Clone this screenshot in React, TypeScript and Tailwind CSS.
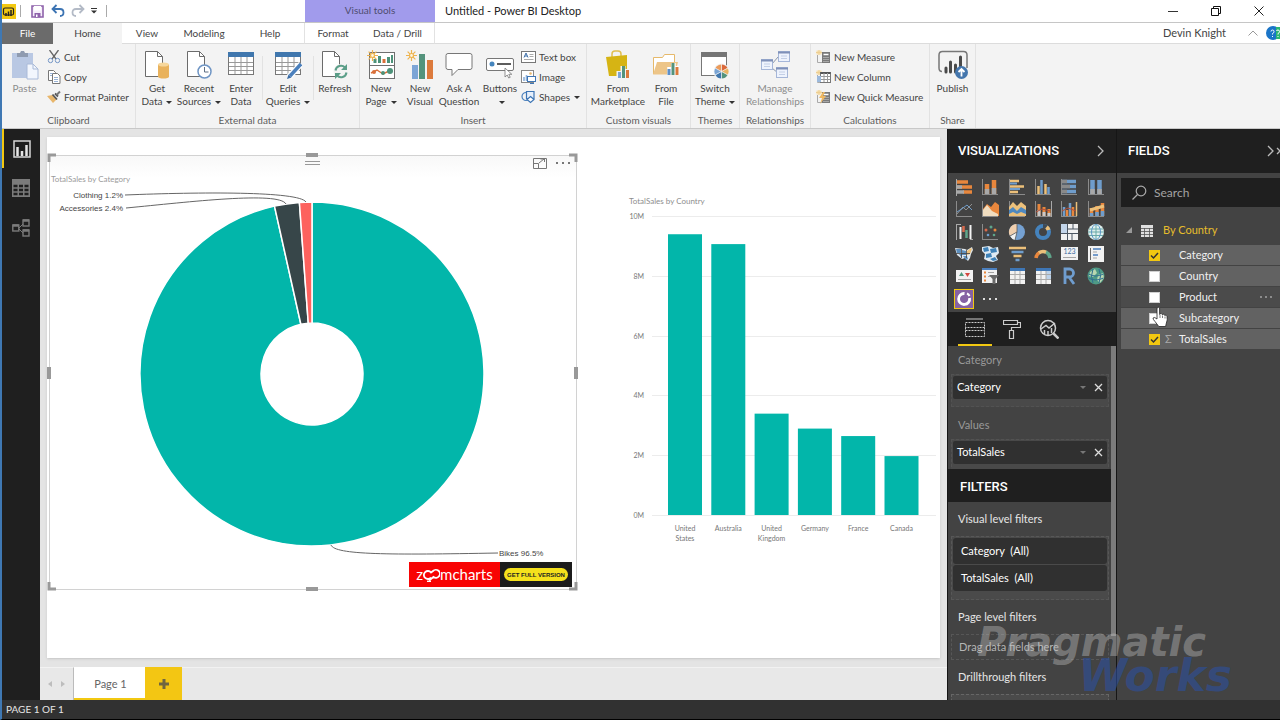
import type { ReactNode } from "react";

const ink = "#6b6b6b";

/* ---------- ribbon icons ---------- */

function Svg({ w, h, children }: { w: number; h: number; children: ReactNode }) {
  return (
    <svg width={w} height={h} viewBox={`0 0 ${w} ${h}`} fill="none" aria-hidden="true">
      {children}
    </svg>
  );
}

function Sun() {
  return (
    <g stroke="#eeb44f" strokeWidth="1.2">
      <path d="M5.5 0v11M0 5.5h11M1.6 1.6l7.8 7.8M9.4 1.6L1.6 9.4" />
      <circle cx="5.5" cy="5.5" r="2" fill="#fff6df" />
    </g>
  );
}

function PasteIcon() {
  return (
    <Svg w={28} h={30}>
      <rect x="1" y="3" width="21" height="25" fill="#b9c8e3" />
      <path d="M6 3h3l1-2h3l1 2h3v4H6z" fill="#8f9bb0" />
      <path d="M16 14h6l5 5v10H16z" fill="#f2f6fd" stroke="#a9bad8" />
      <path d="M22 14v5h5" stroke="#a9bad8" />
    </Svg>
  );
}

function PageShape() {
  return (
    <g stroke={ink} strokeWidth="1">
      <path d="M1.5 1.5h12l5 5v20h-17z" fill="#fff" />
      <path d="M13.5 1.5v5h5" />
    </g>
  );
}

function GetDataIcon() {
  return (
    <Svg w={26} h={30}>
      <PageShape />
      <path d="M14 14.5v12c0 1.4 2.5 2 5.5 2s5.5-.6 5.5-2v-12z" fill="#e9b25c" />
      <ellipse cx="19.5" cy="14.5" rx="5.5" ry="2" fill="#f7d79b" />
    </Svg>
  );
}

function RecentIcon() {
  return (
    <Svg w={26} h={30}>
      <PageShape />
      <circle cx="18.5" cy="21.5" r="6.5" fill="#fff" stroke="#6f95c4" strokeWidth="1.5" />
      <path d="M18.5 17v5h4" stroke="#5f6f83" />
    </Svg>
  );
}

function TableGrid() {
  return (
    <g>
      <rect x="1.5" y="2.5" width="25" height="22" fill="#fff" stroke="#777" />
      <rect x="1" y="2" width="26" height="5" fill="#4077ae" />
      <path d="M2 12.5h24M2 16.5h24M2 20.5h24M8 7v17M14 7v17M20 7v17" stroke="#999" />
    </g>
  );
}

function EnterDataIcon() {
  return (
    <Svg w={28} h={30}>
      <TableGrid />
    </Svg>
  );
}

function EditQueriesIcon() {
  return (
    <Svg w={28} h={30}>
      <TableGrid />
      <path d="M27 14L15 27" stroke="#fff" strokeWidth="6" />
      <path d="M27 14L16 26" stroke="#4b80bd" strokeWidth="3.5" />
      <path d="M14.5 24.5l3 3-4.5 1.5z" fill="#3a6ca5" />
    </Svg>
  );
}

function RefreshIcon() {
  return (
    <Svg w={28} h={30}>
      <PageShape />
      <circle cx="20" cy="21.5" r="7.5" fill="#f3f3f3" />
      <path d="M14.5 20.5a5.5 5.5 0 0 1 9.5-3M25.5 22.5a5.5 5.5 0 0 1-9.5 3" stroke="#5b9e88" strokeWidth="2" />
      <path d="M26 14v6h-6zM14 29v-6h6z" fill="#5b9e88" />
    </Svg>
  );
}

function NewPageIcon() {
  return (
    <Svg w={29} h={30}>
      <rect x="2.5" y="2.5" width="25" height="26" fill="#fff" stroke="#6f6f6f" />
      <path d="M3 15.5h24" stroke="#6f6f6f" />
      <path d="M8 9v4M21.5 7v6" stroke="#4d9279" strokeWidth="3" />
      <path d="M12.5 6v7" stroke="#4d9279" strokeWidth="3" />
      <path d="M17 9v4" stroke="#d9703a" strokeWidth="3" />
      <path d="M25 5v8" stroke="#4d9279" strokeWidth="2" />
      <path d="M4 23l6-3 6 4 8-4" stroke="#d9703a" strokeWidth="1.5" />
      <circle cx="7" cy="22" r="2" fill="#d9703a" />
      <circle cx="16" cy="23" r="2" fill="#4d9279" />
      <circle cx="23" cy="21" r="3" fill="#4d9279" />
      <Sun />
    </Svg>
  );
}

function NewVisualIcon() {
  return (
    <Svg w={28} h={30}>
      <rect x="6" y="15" width="6" height="14" fill="#7ca5d6" />
      <rect x="13" y="4" width="6" height="25" fill="#54937c" />
      <rect x="21" y="10" width="6" height="19" fill="#dc7a3c" />
      <Sun />
    </Svg>
  );
}

function AskIcon() {
  return (
    <Svg w={28} h={30}>
      <path d="M3 3.5h22q2 0 2 2v12q0 2-2 2H13l-6 6v-6H3q-2 0-2-2v-12q0-2 2-2z" fill="#fff" stroke="#777" />
    </Svg>
  );
}

function ButtonsIcon() {
  return (
    <Svg w={28} h={30}>
      <rect x="0.5" y="8.5" width="27" height="12" rx="1.5" fill="#fff" stroke="#777" />
      <circle cx="6" cy="14" r="2.5" fill="#4585bd" />
      <path d="M11 14h14" stroke="#5d5d5d" strokeWidth="2" />
      <path d="M19 18v9l2.2-2 1.5 3 1.5-.7-1.4-3h3z" fill="#fff" stroke="#777" strokeWidth=".8" />
    </Svg>
  );
}

function MarketplaceIcon() {
  return (
    <Svg w={26} h={30}>
      <path d="M7 9V4q0-3 3-3h3q3 0 3 3v5" stroke="#e1bf51" strokeWidth="1.5" />
      <path d="M1 7l21-2v17l-4 4H4z" fill="#d6b414" />
      <path d="M14 28V21M18 28V16M22 28V19" stroke="#f3f3f3" strokeWidth="5" />
      <path d="M14.5 28V22" stroke="#7ca5d6" strokeWidth="3" />
      <path d="M18.5 28V16" stroke="#54937c" strokeWidth="3" />
      <path d="M22.5 28V20" stroke="#dc7a3c" strokeWidth="3" />
    </Svg>
  );
}

function FolderIcon() {
  return (
    <Svg w={28} h={30}>
      <path d="M1.5 24V7.500h9l2-3h10V12" fill="#fff" stroke="#e6b96b" />
      <path d="M1 24.5L5 12h21l-3 12.500z" fill="#edc588" />
      <path d="M17.5 25V17M21.5 25V13M25 25V16" stroke="#fff" strokeWidth="4.5" />
      <path d="M17 25v-6" stroke="#5c8fc9" strokeWidth="3" />
      <path d="M21 25V13" stroke="#54937c" strokeWidth="3" />
      <path d="M25 25v-8" stroke="#dc7a3c" strokeWidth="3" />
    </Svg>
  );
}

function ThemeIcon() {
  return (
    <Svg w={30} h={30}>
      <rect x="1.5" y="2.5" width="25" height="23" fill="#fff" stroke="#777" />
      <rect x="1" y="2" width="26" height="5" fill="#757575" />
      <circle cx="21.5" cy="21.5" r="8" fill="#f3f3f3" />
      <path d="M21.5 21.5V14.500A7 7 0 0 1 27.6 18z" fill="#dc6a3c" />
      <path d="M21.5 21.5L27.6 18a7 7 0 0 1 0 7z" fill="#eab464" />
      <path d="M21.5 21.5L27.6 25a7 7 0 0 1-6.100 3.500z" fill="#54937c" />
      <path d="M21.5 21.5v7a7 7 0 0 1-6.100-3.500z" fill="#4077ae" />
      <path d="M21.5 21.5L15.4 25a7 7 0 0 1 0-7z" fill="#7aa4d4" />
      <path d="M21.5 21.5L15.4 18a7 7 0 0 1 6.100-3.500z" fill="#eb9b5b" />
      <path d="M21.5 14v15M15 18l13 7M28 18l-13 7" stroke="#f3f3f3" strokeWidth=".7" />
    </Svg>
  );
}

function RelationshipsIcon() {
  return (
    <Svg w={30} h={30}>
      <path d="M12 14l6-7M12 18l6 5" stroke="#8c98ac" />
      <g fill="#eef3fd" stroke="#a5b6d8">
        <rect x="1.5" y="9.5" width="11" height="10" />
        <rect x="18.5" y="1.5" width="11" height="10" />
        <rect x="16.5" y="17.5" width="11" height="10" />
      </g>
      <path d="M1 10.5h12M18 2.5h12M16 18.5h12" stroke="#7f90b8" strokeWidth="2" />
      <path d="M4 14h6M4 16.5h6M21 6h6M21 8.5h6M19 22h6M19 24.5h6" stroke="#c3cfe6" />
    </Svg>
  );
}

function PublishIcon() {
  return (
    <Svg w={30} h={30}>
      <path d="M4 21.5Q1 21.5 1 18V5q0-3.5 3.5-3.5h21Q29 1.5 29 5v13" stroke="#777" strokeWidth="1.5" />
      <path d="M8 22v-4M12.5 22V12M17.5 22v-7M22.5 20V7" stroke="#4a4a4a" strokeWidth="3" strokeLinecap="round" />
      <circle cx="23.5" cy="22.5" r="6.5" fill="#4476ad" />
      <path d="M23.5 26.5v-7M20.5 22l3-3 3 3" stroke="#fff" strokeWidth="1.8" />
    </Svg>
  );
}

function CutIcon() {
  return (
    <Svg w={14} h={14}>
      <path d="M2.5 0l6.500 9M11.5 0L5 9" stroke="#666" strokeWidth="1.3" />
      <circle cx="3.5" cy="10.5" r="2.2" stroke="#7396c6" />
      <circle cx="10.5" cy="10.5" r="2.2" stroke="#7396c6" />
    </Svg>
  );
}

function CopyIcon() {
  return (
    <Svg w={14} h={14}>
      <path d="M1.5.5h5l2 2v8h-7z" fill="#fff" stroke="#777" />
      <path d="M5.5 3.5h5l2.5 2.5v7.5h-7.5z" fill="#fff" stroke="#777" />
      <path d="M3 3.5h3M3 5.5h2M7 7.5h4M7 9.5h4M7 11.5h4" stroke="#7fa0cc" strokeWidth=".8" />
    </Svg>
  );
}

function BrushIcon() {
  return (
    <Svg w={14} h={14}>
      <path d="M0 6l5.500-1 4 4.500L6 13z" fill="#e8b66b" />
      <path d="M5.5 4.500l4.500 5M8 3.500l3 3" stroke="#555" strokeWidth="1.8" />
      <path d="M9.5 5L13 1.500" stroke="#777" strokeWidth="2" />
    </Svg>
  );
}

function TextBoxIcon() {
  return (
    <Svg w={15} h={14}>
      <rect x=".5" y="1.5" width="14" height="11" fill="#fff" stroke="#777" />
      <path d="M3 7.5L5 3l2 4.500M3.800 6h2.400" stroke="#3e6fa8" />
      <path d="M8.500 4.500h4M8.500 6.500h4M3 9.500h9.500" stroke="#aaa" />
    </Svg>
  );
}

function ImageIcon() {
  return (
    <Svg w={15} h={14}>
      <rect x=".5" y=".5" width="12" height="12" fill="#fff" stroke="#888" />
      <path d="M3 11V7M5.500 11V5" stroke="#8db0da" strokeWidth="1.6" />
      <circle cx="9.5" cy="3.5" r="1.3" fill="#e8b66b" />
      <rect x="6.5" y="6.5" width="8" height="5" fill="#fff" stroke="#3e76b5" />
      <path d="M9 13.500h4" stroke="#3e76b5" />
    </Svg>
  );
}

function ShapesIcon() {
  return (
    <Svg w={15} h={14}>
      <circle cx="5" cy="6.5" r="4" stroke="#4b80bd" strokeWidth="1.2" />
      <path d="M5.500 1.500h7.500v7H5.500z" fill="#e6effb" stroke="#3e76b5" strokeWidth="1.2" />
      <path d="M9.500 6.500l3.500 3-3.500 3-3.500-3z" fill="#fff" stroke="#3e76b5" strokeWidth="1.2" />
    </Svg>
  );
}

function MeasureIcon({ kind }: { kind: "calc" | "column" | "quick" }) {
  return (
    <Svg w={15} h={14}>
      <rect x=".5" y=".5" width="5" height="4" fill="#f7dfae" />
      <path d="M3 0v5M0 2.500h6" stroke="#edcf93" />
      <path d="M1.500 5v7.500h5" stroke="#aaa" />
      {kind === "column" ? (
        <>
          <rect x="4.5" y="2.5" width="10" height="10" fill="#fff" stroke="#777" />
          <path d="M4.500 3h10" stroke="#555" strokeWidth="2" />
          <path d="M5 6.500h9M5 9.500h9M8 3v9M11.500 3v9" stroke="#999" />
          <rect x="1" y="6" width="4" height="6" fill="#9dbadd" />
        </>
      ) : (
        <>
          <rect x="6" y="2" width="8" height="11" fill="#7a7a7a" />
          <path d="M7.500 4.500h5" stroke="#fff" strokeWidth="1.5" />
          <path d="M7.500 7.500h5M7.500 9.500h5M7.500 11.500h5" stroke="#d5d5d5" strokeDasharray="1 1" />
          {kind === "quick" && <path d="M7 2L3 8h3l-2 6 6-8H7l2-4z" fill="#efb860" />}
        </>
      )}
    </Svg>
  );
}

/* ---------- ribbon ---------- */

function Caret() {
  return <span className="ml-1 inline-block border-x-[3px] border-t-[3px] border-x-transparent border-t-[#333] align-middle" />;
}

interface BigButtonProps {
  icon: ReactNode;
  top: string;
  bottom?: string;
  caret?: boolean;
  disabled?: boolean;
  width: string;
}

function BigButton({ icon, top, bottom, caret, disabled, width }: BigButtonProps) {
  return (
    <button
      type="button"
      disabled={disabled}
      className={`flex shrink-0 flex-col items-center pt-[6px] text-center leading-[13px] whitespace-nowrap ${width} ${disabled ? "text-[#8c8c8c]" : "text-[#444]"}`}
    >
      <span className="mb-[2px] flex h-[30px] items-center">{icon}</span>
      <span>{top}</span>
      <span>
        {bottom}
        {caret && <Caret />}
      </span>
    </button>
  );
}

function SmallButton({ icon, label, caret }: { icon: ReactNode; label: string; caret?: boolean }) {
  return (
    <button type="button" className="flex h-5 items-center gap-[3px] whitespace-nowrap text-[#444]">
      {icon}
      <span>
        {label}
        {caret && <Caret />}
      </span>
    </button>
  );
}

function Group({ label, width, children }: { label: string; width: string; children: ReactNode }) {
  return (
    <div className={`flex shrink-0 flex-col border-r border-[#e2e2e2] ${width}`}>
      <div className="flex flex-1">{children}</div>
      <div className="h-4 text-center leading-4 text-[#5c5c5c]">{label}</div>
    </div>
  );
}

function Ribbon() {
  return (
    <div className="flex h-[85px] shrink-0 overflow-hidden border-b border-[#c8c8c8] bg-[#f3f3f3] text-[10px]">
      <Group label="Clipboard" width="w-[134px]">
        <BigButton icon={<PasteIcon />} top="Paste" width="w-[45px]" disabled />
        <div className="flex flex-col pt-[3px]">
          <SmallButton icon={<CutIcon />} label="Cut" />
          <SmallButton icon={<CopyIcon />} label="Copy" />
          <SmallButton icon={<BrushIcon />} label="Format Painter" />
        </div>
      </Group>
      <Group label="External data" width="w-[224px]">
        <BigButton icon={<GetDataIcon />} top="Get" bottom="Data" caret width="w-[42px]" />
        <BigButton icon={<RecentIcon />} top="Recent" bottom="Sources" caret width="w-[42px]" />
        <BigButton icon={<EnterDataIcon />} top="Enter" bottom="Data" width="w-[42px]" />
        <div className="my-3 border-l border-[#e2e2e2]" />
        <BigButton icon={<EditQueriesIcon />} top="Edit" bottom="Queries" caret width="w-[50px]" />
        <div className="my-3 border-l border-[#e2e2e2]" />
        <BigButton icon={<RefreshIcon />} top="Refresh" width="w-[42px]" />
      </Group>
      <Group label="Insert" width="w-[227px]">
        <BigButton icon={<NewPageIcon />} top="New" bottom="Page" caret width="w-[42px]" />
        <BigButton icon={<NewVisualIcon />} top="New" bottom="Visual" width="w-[36px]" />
        <BigButton icon={<AskIcon />} top="Ask A" bottom="Question" width="w-[42px]" />
        <BigButton icon={<ButtonsIcon />} top="Buttons" caret width="w-[40px]" />
        <div className="flex flex-col pt-[3px] pl-px">
          <SmallButton icon={<TextBoxIcon />} label="Text box" />
          <SmallButton icon={<ImageIcon />} label="Image" />
          <SmallButton icon={<ShapesIcon />} label="Shapes" caret />
        </div>
      </Group>
      <Group label="Custom visuals" width="w-[104px]">
        <BigButton icon={<MarketplaceIcon />} top="From" bottom="Marketplace" width="w-[62px]" />
        <BigButton icon={<FolderIcon />} top="From" bottom="File" width="w-[34px]" />
      </Group>
      <Group label="Themes" width="w-[49px]">
        <BigButton icon={<ThemeIcon />} top="Switch" bottom="Theme" caret width="w-[48px]" />
      </Group>
      <Group label="Relationships" width="w-[71px]">
        <BigButton icon={<RelationshipsIcon />} top="Manage" bottom="Relationships" width="w-[70px]" disabled />
      </Group>
      <Group label="Calculations" width="w-[119px]">
        <div className="flex flex-col pt-[3px] pl-[5px]">
          <SmallButton icon={<MeasureIcon kind="calc" />} label="New Measure" />
          <SmallButton icon={<MeasureIcon kind="column" />} label="New Column" />
          <SmallButton icon={<MeasureIcon kind="quick" />} label="New Quick Measure" />
        </div>
      </Group>
      <Group label="Share" width="w-[46px]">
        <BigButton icon={<PublishIcon />} top="Publish" width="w-[45px]" />
      </Group>
    </div>
  );
}

/* ---------- title bar and tabs ---------- */

function TitleBar() {
  return (
    <header className="flex h-[23px] shrink-0 items-stretch border-b border-[#c6c6c6] bg-white">
      <div className="flex w-[303px] shrink-0 items-center">
        <svg width="14" height="15" viewBox="0 0 14 15" aria-hidden="true">
          <rect width="14" height="15" fill="#f2c811" />
          <rect x="1.5" y="4" width="10" height="7" rx="1.5" fill="none" stroke="#222" strokeWidth="1.2" />
          <path d="M4 12V9M6.500 12V7.500M9 12V6" stroke="#222" strokeWidth="1.5" />
        </svg>
        <div className="mr-[10px] ml-[4px] h-3 border-l border-[#aaa]" />
        <button type="button" aria-label="Save" className="mr-[7px]">
          <Svg w={13} h={13}>
            <path d="M1 1h11v11H1z" fill="#f5edf9" stroke="#8e62ab" strokeWidth="1.6" />
            <rect x="3" y="1" width="7" height="4.5" fill="#fff" />
            <rect x="3.5" y="8" width="6" height="4.5" fill="#8e62ab" />
            <rect x="5" y="9.5" width="1.5" height="2.5" fill="#fff" />
          </Svg>
        </button>
        <button type="button" aria-label="Undo" className="mr-[6px]">
          <Svg w={14} h={14}>
            <path d="M2 5h7q3.500 0 3.500 3.500T9 12" stroke="#3c74b3" strokeWidth="1.8" />
            <path d="M5.500 1L1.500 5l4 4" stroke="#3c74b3" strokeWidth="1.8" />
          </Svg>
        </button>
        <button type="button" aria-label="Redo" className="mr-[6px]">
          <Svg w={14} h={14}>
            <path d="M12 5H5Q1.500 5 1.500 8.500T5 12" stroke="#b3bac6" strokeWidth="1.8" />
            <path d="M8.500 1l4 4-4 4" stroke="#b3bac6" strokeWidth="1.8" />
          </Svg>
        </button>
        <button type="button" aria-label="Customize toolbar" className="mr-[9px]">
          <Svg w={6} h={6}>
            <path d="M0 .5h6" stroke="#333" />
            <path d="M0 2.500h6L3 5.500z" fill="#333" />
          </Svg>
        </button>
        <div className="h-3 border-l border-[#aaa]" />
      </div>
      <div className="w-[130px] shrink-0 bg-[#a19bec] text-center text-[10px] leading-[21px] text-[#4f4d70]">Visual tools</div>
      <h1 className="min-w-0 flex-1 truncate pl-[10px] text-[11px] leading-[22px] text-[#222]">Untitled - Power BI Desktop</h1>
      <button type="button" aria-label="Minimize" className="flex w-[43px] items-center justify-center">
        <Svg w={10} h={10}>
          <path d="M0 5.500h10" stroke="#333" />
        </Svg>
      </button>
      <button type="button" aria-label="Restore" className="flex w-[43px] items-center justify-center">
        <Svg w={10} h={10}>
          <path d="M.5 2.500h7v7h-7zM2.500 2.500v-2h7v7h-2" stroke="#111" />
        </Svg>
      </button>
      <button type="button" aria-label="Close" className="flex w-[43px] items-center justify-center">
        <Svg w={10} h={10}>
          <path d="M.5.5l9 9M9.500.5l-9 9" stroke="#222" />
        </Svg>
      </button>
    </header>
  );
}

const tabs = [
  { name: "File", style: "w-[51px] bg-[#6b6b6b] text-white" },
  { name: "Home", style: "w-[69px] bg-[#f3f3f3]" },
  { name: "View", style: "w-[50px]" },
  { name: "Modeling", style: "w-[64px]" },
  { name: "Help", style: "w-[69px] border-r border-r-[#e2e2e2]" },
  { name: "Format", style: "w-[56px]" },
  { name: "Data / Drill", style: "w-[74px] border-r border-r-[#e2e2e2]" },
];

function TabRow() {
  return (
    <nav className="flex h-[21px] shrink-0 items-stretch bg-white text-[10px] text-[#444]">
      {tabs.map((tab) => (
        <button
          key={tab.name}
          type="button"
          className={`shrink-0 ${tab.style} ${tab.name === "Home" || tab.name === "File" ? "" : "border-b border-b-[#dcdcdc]"}`}
        >
          {tab.name}
        </button>
      ))}
      <div className="flex min-w-0 flex-1 items-center justify-end border-b border-[#dcdcdc] text-[11px]">
        <span>Devin Knight</span>
        <button type="button" aria-label="Collapse ribbon" className="mr-2 ml-[22px]">
          <Svg w={10} h={6}>
            <path d="M.5 5.500L5 1l4.500 4.500" stroke="#999" />
          </Svg>
        </button>
        <button type="button" aria-label="Help">
          <Svg w={14} h={14}>
            <circle cx="7" cy="7" r="7" fill="#1a75c8" />
            <path d="M10 1h4v12h-4z" fill="#2bb673" />
            <path d="M5 5.500q0-1.500 1.500-1.500T8 5.500t-1.500 2v1M6.500 10v1M10.500 5q0-1 1.500-1t1.500 1.500-1.500 2v1M12 10v1" stroke="#fff" />
          </Svg>
        </button>
      </div>
    </nav>
  );
}

/* ---------- view switcher ---------- */

function ViewBar() {
  return (
    <nav className="flex w-[38px] shrink-0 flex-col bg-[#1f1f1f]">
      <button type="button" aria-label="Report view" className="flex h-[39px] items-center justify-center border-l-2 border-[#f2c811] pr-px">
        <Svg w={18} h={18}>
          <rect x="1" y="1" width="16" height="16" stroke="#d8d8d8" strokeWidth="1.5" />
          <path d="M4.500 16V7M9 16v-5M13.500 16V5" stroke="#e6e6e6" strokeWidth="2.5" />
        </Svg>
      </button>
      <button type="button" aria-label="Data view" className="flex h-[40px] items-center justify-center">
        <Svg w={18} h={18}>
          <rect width="18" height="18" fill="#7b7b7b" />
          <path d="M1.500 7h4M7 7h4M12.500 7h4M1.500 11h4M7 11h4M12.500 11h4M1.500 15h4M7 15h4M12.500 15h4" stroke="#1f1f1f" strokeWidth="2.5" />
        </Svg>
      </button>
      <button type="button" aria-label="Model view" className="flex h-[40px] items-center justify-center">
        <Svg w={18} h={18}>
          <path d="M7 9l4-4M7 10l4 4" stroke="#7b7b7b" />
          <g stroke="#7b7b7b" strokeWidth="1.4">
            <rect x=".8" y="6" width="6" height="6" />
            <rect x="11" y="1" width="6" height="6" />
            <rect x="11" y="11" width="6" height="6" />
            <path d="M.8 6.500h6M11 1.500h6M11 11.500h6" strokeWidth="2.4" />
          </g>
        </Svg>
      </button>
    </nav>
  );
}

/* ---------- report canvas ---------- */

const slices = [
  { name: "Bikes", from: 0, to: 347.4, color: "#02b6aa" },
  { name: "Accessories", from: 347.4, to: 355.8, color: "#374649" },
  { name: "Clothing", from: 355.8, to: 360, color: "#fd625e" },
];

function slicePath(from: number, to: number) {
  const cx = 263;
  const cy = 219;
  const point = (deg: number, r: number) => {
    const rad = (deg * Math.PI) / 180;
    return `${(cx + r * Math.sin(rad)).toFixed(2)} ${(cy - r * Math.cos(rad)).toFixed(2)}`;
  };
  const large = to - from > 180 ? 1 : 0;
  return `M${point(from, 172)}A172 172 0 ${large} 1 ${point(to, 172)}L${point(to, 51)}A51 51 0 ${large} 0 ${point(from, 51)}Z`;
}

function DonutVisual() {
  return (
    <section aria-label="TotalSales by Category" className="relative">
      <svg viewBox="0 0 528 435" className="block w-full overflow-visible">
        <defs>
          <linearGradient id="head" x1="0" y1="0" x2="0" y2="1">
            <stop offset="0" stopColor="#f8f8f8" />
            <stop offset="1" stopColor="#fff" />
          </linearGradient>
        </defs>
        <rect x="1" y="1" width="526" height="22" fill="url(#head)" />
        <path d="M.5.500h527v434H.5z" fill="none" stroke="#d2d2d2" />
        <text x="2" y="27" fontSize="8" fill="#9a9a9a">TotalSales by Category</text>
        {slices.map((s) => (
          <path key={s.name} d={slicePath(s.from, s.to)} fill={s.color} stroke="#fff" strokeWidth="1.5" />
        ))}
        <g fill="none" stroke="#666" strokeWidth="1">
          <path d="M76 40C150 37 250 36 257 47" />
          <path d="M77 53C140 47 230 36 237 49" />
          <path d="M282 390C286 400 340 400 449 398" />
        </g>
        <g fontSize="8" fill="#444" fontFamily="Liberation Sans, Arial, sans-serif">
          <text x="74" y="43" textAnchor="end">Clothing 1.2%</text>
          <text x="74" y="56" textAnchor="end">Accessories 2.4%</text>
          <text x="450" y="401">Bikes 96.5%</text>
        </g>
        <g fill="none" stroke="#999">
          <path d="M0 7V0h7M520 0h7v7M520 434h7v-7M0 427v7h7" strokeWidth="3" />
          <path d="M257 0h12M257 434h12M0 212v12M527 212v12" strokeWidth="4" />
          <path d="M256 6.500h15M256 9.500h15" />
        </g>
        <g stroke="#777" fill="none">
          <path d="M484.500 3.500h13v10h-13zM484.500 8.500h5v5M490 8l5-4M491.500 4h4v3" />
        </g>
        <path d="M507 8h2M513 8h2M519 8h2" stroke="#777" strokeWidth="2" />
      </svg>
      <div className="absolute right-[5px] bottom-[3px] flex h-[25px]">
        <div className="flex w-[91px] items-center justify-center bg-[#f80404] text-[15px] leading-none text-white">
          z
          <svg width="17" height="15" viewBox="0 0 17 15" fill="none" stroke="#fff" strokeWidth="1.8" aria-hidden="true">
            <path d="M8 10.500A4 4 0 1 1 8 5.500L10 4A4 4 0 1 1 10.500 10L6 13.500" />
            <path d="M4 14.500h4" />
          </svg>
          mcharts
        </div>
        <div className="flex w-[72px] items-center justify-center bg-[#1c1c1c]">
          <a
            href="#full-version"
            className="flex h-[13px] w-[64px] items-center justify-center rounded-full bg-[#f5e11c] font-['Liberation_Sans',Arial,sans-serif] text-[6px] leading-none font-bold whitespace-nowrap text-[#222]"
          >
            GET FULL VERSION
          </a>
        </div>
      </div>
    </section>
  );
}

const sales = [
  { country: ["United", "States"], value: 9.39 },
  { country: ["Australia"], value: 9.06 },
  { country: ["United", "Kingdom"], value: 3.39 },
  { country: ["Germany"], value: 2.89 },
  { country: ["France"], value: 2.64 },
  { country: ["Canada"], value: 1.97 },
];

function BarVisual() {
  const base = 325;
  const perMillion = 29.9;
  return (
    <section aria-label="TotalSales by Country" className="pt-[35px]">
      <svg viewBox="0 0 315 360" className="block w-full">
        <text x="4" y="14" fontSize="8" fill="#8d8d8d">TotalSales by Country</text>
        {[0, 2, 4, 6, 8, 10].map((tick) => (
          <g key={tick}>
            <path d={`M27 ${Math.round(base - tick * perMillion) + 0.5}H311`} stroke="#ececec" />
            <text x="19" y={base - tick * perMillion + 3} fontSize="7" fill="#777" textAnchor="end">
              {tick}M
            </text>
          </g>
        ))}
        {sales.map((s, i) => (
          <g key={s.country.join(" ")}>
            <rect x={43 + i * 43.3} y={base - s.value * perMillion} width="34" height={s.value * perMillion} fill="#02b6aa" />
            {s.country.map((line, n) => (
              <text key={line} x={60 + i * 43.3} y={341 + n * 10} fontSize="7" fill="#777" textAnchor="middle">
                {line}
              </text>
            ))}
          </g>
        ))}
      </svg>
    </section>
  );
}

function Canvas() {
  return (
    <main className="flex min-w-0 flex-1 flex-col bg-[#e4e4e4]">
      <div className="flex min-h-0 flex-1 flex-col px-[7px] pt-2 pb-[9px]">
        <div className="grid min-h-0 flex-1 grid-cols-[528fr_315fr] content-start gap-12 bg-white pt-[18px] pl-[2px] shadow">
          <DonutVisual />
          <BarVisual />
        </div>
      </div>
      <div className="flex h-[33px] shrink-0 bg-[#e8e8e8]">
        <div className="flex w-[34px] items-center justify-center gap-[9px] border-t border-r border-t-[#f2f2f2] border-r-[#bbb]">
          <button type="button" aria-label="Previous page" className="border-y-[3px] border-r-4 border-y-transparent border-r-[#bdbdbd]" />
          <button type="button" aria-label="Next page" className="border-y-[3px] border-l-4 border-y-transparent border-l-[#bdbdbd]" />
        </div>
        <button type="button" className="w-[71px] border-b-2 border-[#f2c811] bg-white pt-[3px] pl-[2px] text-[11px] text-[#666]">Page 1</button>
        <button type="button" aria-label="New page" className="flex w-[37px] items-center justify-center bg-[#f3c613]">
          <Svg w={10} h={10}>
            <path d="M5 0v10M0 5h10" stroke="#6f6640" strokeWidth="3" />
          </Svg>
        </button>
        <div className="flex-1 border-t border-[#f2f2f2]" />
      </div>
    </main>
  );
}

/* ---------- visualization gallery ---------- */

const O = "#e8873d";
const B = "#6f9dcc";
const Y = "#ecc07a";
const G = "#a9a9a9";
const W = "#f2f2f2";
const axis = <path d="M1.500 1v16M1 16.500h16" stroke="#8b8b8b" strokeWidth="1" />;

const gallery: { name: string; art: ReactNode }[] = [
  {
    name: "Stacked bar chart",
    art: (
      <>
        <path d="M1.500 1v17" stroke={G} />
        <path d="M2 4h5M2 9h9M8 14h9" stroke={O} strokeWidth="3.5" />
        <path d="M7 4h6M11 9h6" stroke={O} strokeWidth="3.5" />
        <path d="M2 9h5M2 14h7" stroke={G} strokeWidth="3.5" />
      </>
    ),
  },
  {
    name: "Stacked column chart",
    art: (
      <>
        {axis}
        <path d="M6 16V6M13 16V2" stroke={O} strokeWidth="4.5" />
        <path d="M6 16v-5M13 16v-6" stroke={G} strokeWidth="4.5" />
      </>
    ),
  },
  {
    name: "Clustered bar chart",
    art: (
      <>
        {axis}
        <path d="M2 3h9M2 8.500h14M2 14h8" stroke={Y} strokeWidth="2.5" />
        <path d="M2 5.500h7M2 11h10" stroke={B} strokeWidth="2" />
      </>
    ),
  },
  {
    name: "Clustered column chart",
    art: (
      <>
        {axis}
        <path d="M4.500 16V8M11.500 16V6" stroke={Y} strokeWidth="2.5" />
        <path d="M7.500 16V2M14.500 16V9" stroke={B} strokeWidth="2.5" />
      </>
    ),
  },
  {
    name: "100% stacked bar chart",
    art: (
      <>
        {axis}
        <path d="M2 3.500h14M2 8.500h14M2 13.500h14" stroke={B} strokeWidth="3.5" />
        <path d="M2 3.500h5M2 8.500h8M2 13.500h5" stroke="#8a8a8a" strokeWidth="3.5" />
      </>
    ),
  },
  {
    name: "100% stacked column chart",
    art: (
      <>
        {axis}
        <path d="M5.500 2v14M12.500 2v14" stroke={B} strokeWidth="4.5" />
        <path d="M5.500 11v5M12.500 11v5" stroke={G} strokeWidth="4.5" />
      </>
    ),
  },
  {
    name: "Line chart",
    art: (
      <>
        {axis}
        <path d="M2 14l6-7 3 3 6-6" stroke="#8f8f8f" />
        <path d="M2 12l6-4 4-3 5 5" stroke={B} />
      </>
    ),
  },
  {
    name: "Area chart",
    art: (
      <>
        {axis}
        <path d="M2 9l4-5 4 3 4-5 4 3v11H2z" fill={O} />
        <path d="M2 10l4-5 5 6 6 3v2H2z" fill="#f0ddc0" />
      </>
    ),
  },
  {
    name: "Stacked area chart",
    art: (
      <>
        {axis}
        <path d="M1 7l4-5 4 4 4-4 5 4v6H1z" fill={Y} />
        <path d="M1 10l4-3 4 4 4-4 5 3v6H1z" fill="#4f88bf" />
        <path d="M1 14l4-2 4 2 4-2 5 2v2H1z" fill={Y} />
      </>
    ),
  },
  {
    name: "Line and stacked column chart",
    art: (
      <>
        {axis}
        <path d="M5 16V4M10 16V7M15 16V9" stroke={O} strokeWidth="3" />
        <path d="M5 16v-6M10 16v-4M15 16v-3" stroke="#c9c9c9" strokeWidth="3" />
        <path d="M2 12l6-3 8 2" stroke="#b24f3a" />
        <path d="M17.500 1v16" stroke={G} />
      </>
    ),
  },
  {
    name: "Line and clustered column chart",
    art: (
      <>
        {axis}
        <path d="M4 16V7M10 16V3" stroke={B} strokeWidth="2.5" />
        <path d="M7 16v-6M13 16V7" stroke={O} strokeWidth="2.5" />
        <path d="M16.500 16V2" stroke={Y} strokeWidth="1.5" />
        <path d="M2 11l6-3 8 3" stroke="#b24f3a" />
      </>
    ),
  },
  {
    name: "Ribbon chart",
    art: (
      <>
        {axis}
        <path d="M4.500 16V8M10 16V6M15.500 16V3" stroke={O} strokeWidth="3.5" />
        <path d="M3 10l14-4" stroke={Y} strokeWidth="3" />
        <path d="M4.500 16v-3M10 16v-4M15.500 16v-5" stroke={B} strokeWidth="3.5" />
      </>
    ),
  },
  {
    name: "Waterfall chart",
    art: (
      <>
        <path d="M1.500 1v16M1 1.500h5M15 16.500h3" stroke={G} />
        <path d="M5.500 16V4M15.500 16V2" stroke={W} strokeWidth="2" />
        <path d="M8.500 9V3" stroke="#d96a4c" strokeWidth="2.5" />
        <path d="M11.500 15V7" stroke="#5fa58a" strokeWidth="2.5" />
      </>
    ),
  },
  {
    name: "Scatter chart",
    art: (
      <>
        {axis}
        <circle cx="5" cy="7" r="1.5" fill="#d96a4c" />
        <circle cx="10" cy="4" r="1.5" fill="#5fa58a" />
        <circle cx="14" cy="7" r="1.5" fill={O} />
        <circle cx="7" cy="12" r="1.3" fill={B} />
        <circle cx="13" cy="12" r="1.3" fill="#5fa58a" />
      </>
    ),
  },
  {
    name: "Pie chart",
    art: (
      <>
        <circle cx="9" cy="9" r="8" fill="#75a1d2" />
        <path d="M9 9V1a8 8 0 0 0-7 12z" fill="#f0cfae" />
        <path d="M9 9l-7 4a8 8 0 0 0 5 4z" fill={W} />
        <path d="M9 1v8l-7 4M9 9l-2 8" stroke="#555" strokeWidth=".8" />
      </>
    ),
  },
  {
    name: "Donut chart",
    art: (
      <>
        <circle cx="9" cy="9" r="6" stroke="#4583bd" strokeWidth="4" />
        <path d="M9 3a6 6 0 0 1 5 3" stroke="#3f4a55" strokeWidth="4" />
        <path d="M12.500 4a6 6 0 0 1 2 3" stroke={Y} strokeWidth="4" />
      </>
    ),
  },
  {
    name: "Treemap",
    art: (
      <>
        <rect x="1" y="1" width="17" height="16" fill={W} />
        <path d="M1 1h6v9H1z" fill="#c3d5ea" />
        <path d="M7.500 1v16M1 10.500h17M8 6h10M13 1v5M12 10v7" stroke="#4c5662" />
      </>
    ),
  },
  {
    name: "Map",
    art: (
      <>
        <circle cx="9" cy="9" r="8" fill="#dff0ee" />
        <path d="M2 6h14M1 9h16M2 12.500h14M9 1v16" stroke="#69a9a8" />
        <ellipse cx="9" cy="9" rx="4.5" ry="7.5" stroke="#5e96c6" />
      </>
    ),
  },
  {
    name: "Filled map",
    art: (
      <>
        <path d="M0 3l10 1 2 1 5-3 1 3-2 4-1 4-2 3-3-3-3 1-5-4z" fill="#dfe7ee" />
        <path d="M1 4h5v4H2zM7 5l4 1v4H7zM4 9h3v4z" fill="#5d8fbe" />
        <path d="M12 6l4-3 1 1-2 5-3 1z" fill={Y} />
        <path d="M8 11h4l1 3-2 1z" fill="#5d8fbe" />
        <path d="M6.500 4v9M1 8.500h14M11.500 5v8" stroke="#434343" strokeWidth=".8" />
      </>
    ),
  },
  {
    name: "Shape map",
    art: (
      <>
        <path d="M1 2l7-1 4 2 5-1 1 6-3 3 2 4-5 2-5-1-4-2 1-5-3-3z" fill="#dfeaf3" />
        <path d="M2 3l5-1 1 4-5 1zM9 4l6-1 1 4-6 1zM5 9l5-1 1 4-6 1zM9 14l5-2 2 3-4 1z" fill="#3f82b8" />
      </>
    ),
  },
  {
    name: "Funnel",
    art: (
      <>
        <path d="M1 3h17" stroke={Y} strokeWidth="2.5" />
        <path d="M3.500 7h12" stroke={B} strokeWidth="2.5" />
        <path d="M5.500 11h8" stroke={Y} strokeWidth="2.5" />
        <path d="M7.500 15h4" stroke={B} strokeWidth="2.5" />
      </>
    ),
  },
  {
    name: "Gauge",
    art: (
      <>
        <path d="M2 13a7 7 0 0 1 3.500-5.500" stroke={O} strokeWidth="3.5" />
        <path d="M5 7.800a7 7 0 0 1 7.500-.3" stroke={Y} strokeWidth="3.5" />
        <path d="M12 7.200A7 7 0 0 1 16 13" stroke="#5fa58a" strokeWidth="3.5" />
      </>
    ),
  },
  {
    name: "Card",
    art: (
      <>
        <rect x="1" y="2" width="17" height="13" fill={W} />
        <text x="9.5" y="9" fontSize="7" textAnchor="middle" fill="#3f6fa5">123</text>
        <path d="M3 12.500h13" stroke="#a5a5a5" />
      </>
    ),
  },
  {
    name: "Multi-row card",
    art: (
      <>
        <rect x="1" y="1" width="16" height="16" fill={W} />
        <path d="M3.500 3v12" stroke="#6a6a6a" />
        <path d="M6 4h8M6 10h5" stroke="#4b7fbe" strokeWidth="1.5" />
        <path d="M6 7h4M6 13h4" stroke="#a5a5a5" />
      </>
    ),
  },
  {
    name: "KPI",
    art: (
      <>
        <rect x="1" y="3" width="17" height="12" fill={W} />
        <path d="M4 9l2.500-4L9 9z" fill="#4f9a7d" />
        <path d="M10 6h5l-2.500 4z" fill="#d1483f" />
        <path d="M3 12.500h13" stroke="#a5a5a5" />
      </>
    ),
  },
  {
    name: "Slicer",
    art: (
      <>
        <rect x="1" y="1" width="15" height="15" fill={W} />
        <path d="M1 2h15" stroke="#4b7fbe" strokeWidth="2" />
        <path d="M3 5.500h2M3 9.500h2M3 13.500h2" stroke={O} strokeWidth="2" />
        <path d="M7 5.500h6M7 9.500h4" stroke="#a5a5a5" />
        <path d="M8 8h10l-3.500 4v5h-3v-5z" fill="#6a6a6a" />
      </>
    ),
  },
  {
    name: "Table",
    art: (
      <>
        <rect x="2" y="1" width="15" height="16" fill={W} />
        <path d="M2 2.500h15" stroke="#3e76b5" strokeWidth="3" />
        <path d="M2 7.500h15M2 12.500h15M7 4v13M12 4v13" stroke="#aaa" />
      </>
    ),
  },
  {
    name: "Matrix",
    art: (
      <>
        <rect x="2" y="1" width="15" height="16" fill={W} />
        <path d="M2 2.500h15" stroke="#3e76b5" strokeWidth="3" />
        <path d="M12 4h5v9h-5z" fill="#bcd2ea" />
        <path d="M2 7.500h15M2 12.500h15M7 4v13M12 4v13" stroke="#aaa" />
      </>
    ),
  },
  {
    name: "R script visual",
    art: <path d="M5 17V2h4.500a4 4 0 0 1 0 8H5M9 10l5 7" stroke="#6f9dcf" strokeWidth="2.8" />,
  },
  {
    name: "ArcGIS map",
    art: (
      <>
        <circle cx="9" cy="9" r="8.5" fill="#4f9a86" />
        <path d="M3 5l5-3 2 4-4 4-4-1zM11 8l5-2 1 5-4 5-3-3z" fill="#b9d7b0" />
        <path d="M1.500 7q7 4 15 0M1.500 11q7 4 15 0M6 2q-3 7 0 14M12 2q3 7 0 14" stroke="#2f6f91" />
      </>
    ),
  },
  {
    name: "ZoomCharts donut",
    art: (
      <>
        <rect width="18" height="18" fill="#8662a4" />
        <path d="M14.500 8a5.500 5.500 0 1 1-5-4.500" stroke="#fff" strokeWidth="2.8" />
        <path d="M12 3.500a5 5 0 0 1 2.500 2.500" stroke="#fff" strokeWidth="2" />
      </>
    ),
  },
];

function FieldWell({ label, value }: { label: string; value: string }) {
  return (
    <div>
      <div className="h-7 px-[7px] text-[11px] leading-7 text-[#999]">{label}</div>
      <div className="mr-[2px] border border-dashed border-[#525252] bg-[#494949] px-px pt-px pb-[7px]">
        <div className="flex h-[23px] items-center rounded-[2px] bg-[#303030] px-[4px] text-[11px] text-white">
          <span className="flex-1">{value}</span>
          <button type="button" aria-label={`${value} options`} className="mr-2">
            <span className="block border-x-[3px] border-t-[3px] border-x-transparent border-t-[#777]" />
          </button>
          <button type="button" aria-label={`Remove ${value}`}>
            <Svg w={9} h={9}>
              <path d="M1 1l7 7M8 1L1 8" stroke="#ddd" strokeWidth="1.3" />
            </Svg>
          </button>
        </div>
      </div>
    </div>
  );
}

function Visualizations() {
  return (
    <aside className="flex w-[170px] shrink-0 flex-col border-x border-[#161616] bg-[#434343] text-[#e6e6e6]">
      <div className="flex h-[44px] shrink-0 items-center justify-between bg-[#1f1f1f] px-[12px] pl-[10px]">
        <h2 className="font-[Roboto,sans-serif] text-[13px] font-medium text-white">VISUALIZATIONS</h2>
        <button type="button" aria-label="Collapse visualizations">
          <Svg w={7} h={12}>
            <path d="M1 1l5 5-5 5" stroke="#bbb" strokeWidth="1.3" />
          </Svg>
        </button>
      </div>
      <div className="grid h-[139px] shrink-0 grid-cols-6 grid-rows-6 pt-[3px] pr-[7px] pb-[2px] pl-[3px]">
        {gallery.map((v) => (
          <button key={v.name} type="button" aria-label={v.name} className="flex items-center justify-center">
            <span className={v.name === "ZoomCharts donut" ? "border border-[#f2c811]" : ""}>
              <svg width="18" height="18" viewBox="0 0 18 18" fill="none" className="block" aria-hidden="true">
                {v.art}
              </svg>
            </span>
          </button>
        ))}
        <button type="button" aria-label="More visuals" className="flex items-center justify-center gap-1">
          <i className="size-[2px] bg-[#ddd]" />
          <i className="size-[2px] bg-[#ddd]" />
          <i className="size-[2px] bg-[#ddd]" />
        </button>
      </div>
      <div className="flex h-[34px] shrink-0 gap-[3px] bg-[#1f1f1f] pl-[10px]">
        <button type="button" aria-label="Fields" className="flex w-[34px] items-center justify-center border-b-2 border-[#f2c811]">
          <Svg w={20} h={20}>
            <path d="M1 1h17" stroke="#ccc" />
            <path d="M.5 4.500h19v5H.5zM.5 12.500h19v6H.5zM.5 9.500v3M19.500 9.500v3" stroke="#ccc" strokeDasharray="2 1" />
          </Svg>
        </button>
        <button type="button" aria-label="Format" className="flex w-[34px] items-center justify-center">
          <Svg w={18} h={20}>
            <path d="M.5 1.500h14v4H.5zM14.500 3.500h3v5h-9v3M6.500 11.500h4v8h-4z" stroke="#ccc" strokeWidth="1.2" />
          </Svg>
        </button>
        <button type="button" aria-label="Analytics" className="flex w-[34px] items-center justify-center">
          <Svg w={20} h={20}>
            <circle cx="9" cy="9" r="7.5" stroke="#ccc" strokeWidth="1.5" />
            <path d="M14.500 14.500l5 5" stroke="#ccc" strokeWidth="2.5" />
            <path d="M2 10l5-3.500 3 2.500 6-5M5.500 15v-4M9 16v-4M12.500 14V9" stroke="#ccc" strokeWidth="1.5" />
          </Svg>
        </button>
      </div>
      <div className="flex min-h-0 flex-1">
        <div className="flex min-w-0 flex-1 flex-col overflow-hidden">
          <div className="flex shrink-0 flex-col gap-1 pl-[3px]">
            <FieldWell label="Category" value="Category" />
            <FieldWell label="Values" value="TotalSales" />
          </div>
          <h3 className="-mt-[3px] h-[33px] shrink-0 bg-[#1f1f1f] pl-3 font-[Roboto,sans-serif] text-[13px] leading-9 font-medium text-white">
            FILTERS
          </h3>
          <div className="shrink-0 pl-[3px] text-[11px]">
            <div className="px-[7px] leading-[34px]">Visual level filters</div>
            <div className="mr-[2px] flex flex-col gap-px border border-dashed border-[#575757] bg-[#4a4a4a] px-px pt-px pb-[8px] leading-[26px] text-white">
              <button type="button" className="h-[26px] rounded-[3px] bg-[#303030] px-2 text-left">Category&nbsp; (All)</button>
              <button type="button" className="h-[26px] rounded-[3px] bg-[#303030] px-2 text-left">TotalSales&nbsp; (All)</button>
            </div>
            <div className="px-[7px] leading-[34px]">Page level filters</div>
            <div className="mr-[2px] border border-dashed border-[#575757] px-[7px] leading-[24px] text-[#b5b5b5]">Drag data fields here</div>
            <div className="px-[7px] leading-[34px]">Drillthrough filters</div>
            <div className="mr-[2px] h-[26px] border border-dashed border-[#666] bg-[#4a4a4a]" />
          </div>
        </div>
        <div className="h-[290px] w-[5px] shrink-0 bg-[#7c7c7c]" />
      </div>
    </aside>
  );
}

const fields = [
  { name: "Category", checked: true },
  { name: "Country", checked: false },
  { name: "Product", checked: false, hovered: true },
  { name: "Subcategory", checked: false },
  { name: "TotalSales", checked: true, sum: true },
];

function FieldsPane() {
  return (
    <aside className="flex w-[163px] shrink-0 flex-col bg-[#434343] text-[#e6e6e6]">
      <div className="flex h-[44px] shrink-0 items-center justify-between bg-[#1f1f1f] pl-[11px]">
        <h2 className="font-[Roboto,sans-serif] text-[13px] font-medium text-white">FIELDS</h2>
        <button type="button" aria-label="Collapse fields">
          <Svg w={13} h={12}>
            <path d="M1 1l5 5-5 5M10 3l3 3-3 3" stroke="#bbb" strokeWidth="1.3" />
          </Svg>
        </button>
      </div>
      <label className="mt-[5px] ml-1 flex h-[29px] items-center bg-[#1f1f1f] pl-[11px]">
        <Svg w={15} h={15}>
          <circle cx="9" cy="6" r="4.8" stroke="#aaa" strokeWidth="1.2" />
          <path d="M5.500 9.500L.5 14.500" stroke="#aaa" strokeWidth="1.2" />
        </Svg>
        <input
          type="search"
          placeholder="Search"
          aria-label="Search fields"
          className="ml-[7px] min-w-0 flex-1 bg-transparent text-[12px] outline-none placeholder:text-[#a3a3a3]"
        />
      </label>
      <div className="flex h-[38px] items-center pt-[9px] pl-[9px] text-[11px]">
        <Svg w={7} h={7}>
          <path d="M6 0v6H0z" fill="#999" />
        </Svg>
        <span className="mr-[10px] ml-[8px]">
          <Svg w={12} h={12}>
            <rect width="12" height="12" fill="#e0e0e0" />
            <path d="M0 3.500h12M0 6.500h12M0 9.500h12M3.500 3v9M8.500 3v9" stroke="#555" strokeWidth=".8" />
          </Svg>
        </span>
        <span className="text-[#e6bd2c]">By Country</span>
      </div>
      <ul className="ml-1 flex flex-col gap-px text-[11px]">
        {fields.map((f) => (
          <li key={f.name} className={f.hovered ? "bg-[#4b4b4b]" : "bg-[#626262]"}>
            <label className="flex h-5 items-center pl-7">
              <input
                type="checkbox"
                defaultChecked={f.checked}
                className="peer size-[11px] appearance-none border border-[#d0d0d0] bg-white checked:border-[#f2c811] checked:bg-[#f2c811]"
              />
              <svg width="11" height="11" viewBox="0 0 11 11" fill="none" className="-ml-[11px] opacity-0 peer-checked:opacity-100" aria-hidden="true">
                <path d="M2 5.500l2.500 2.500L9 3" stroke="#333" strokeWidth="1.5" />
              </svg>
              <span className="w-[19px] pl-[5px] text-[#aaa]">{f.sum && "Σ"}</span>
              <span className="flex-1 text-[#f0f0f0]">{f.name}</span>
              {f.hovered && (
                <span className="flex gap-[3px] pr-2">
                  <i className="size-[2px] bg-[#8c8c8c]" />
                  <i className="size-[2px] bg-[#8c8c8c]" />
                  <i className="size-[2px] bg-[#8c8c8c]" />
                </span>
              )}
            </label>
          </li>
        ))}
      </ul>
    </aside>
  );
}

export default function App() {
  return (
    <div className="relative flex h-screen flex-col overflow-hidden border-b border-l-2 border-b-black border-l-[#3f78b3] font-[Lato,'Open_Sans',sans-serif]">
      <TitleBar />
      <TabRow />
      <Ribbon />
      <div className="flex min-h-0 flex-1">
        <ViewBar />
        <Canvas />
        <Visualizations />
        <FieldsPane />
      </div>
      <footer className="h-[19px] shrink-0 bg-[#313131] pl-1 text-[10px] leading-[19px] text-[#e6e6e6]">PAGE 1 OF 1</footer>

      {/* watermark and pointer float over the panes */}
      <div className="pointer-events-none absolute right-[48px] bottom-[26px] text-right font-['DejaVu_Sans',sans-serif] leading-[34px] font-bold italic">
        <div className="mr-[26px] text-[40px] text-[#c8c8c8]/40">Pragmatic</div>
        <div className="text-[44px] text-[#2c4f9e]/60">Works</div>
      </div>
      <svg width="18" height="22" viewBox="0 0 18 22" className="pointer-events-none absolute top-[306px] right-[110px]" aria-hidden="true">
        <path
          d="M5 2q1.300-1.500 2.600 0v6.500l.6-.8q1.400-.4 2 .8 1.600-.8 2.400.7 1.800-.5 2.400 1.200.8 3.500-.6 6.600l-.8 3.500H6.800L3 15.500Q1 13.500 1 12q1.500-1.500 4 1z"
          fill="#fff"
          stroke="#222"
          strokeWidth=".8"
        />
        <path d="M8 9v3M10.500 9.500V12M13 10.500V12.500" stroke="#444" strokeWidth=".7" />
      </svg>
    </div>
  );
}
